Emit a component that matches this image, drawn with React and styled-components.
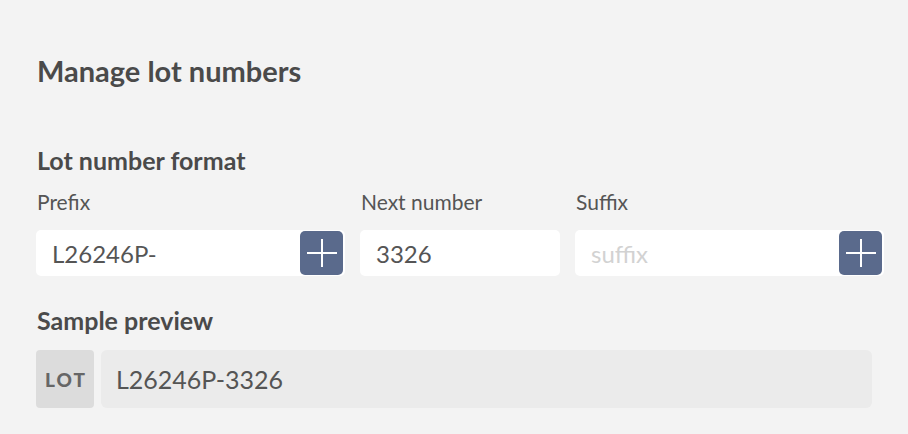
import React from 'react';
import styled, { createGlobalStyle } from 'styled-components';

const GlobalStyle = createGlobalStyle`
  html, body {
    margin: 0;
    padding: 0;
    background: #f3f3f3;
  }
  body {
    font-family: Lato, "Open Sans", sans-serif;
    color: #4a4a4a;
  }
  * { box-sizing: border-box; }
`;

const Page = styled.div`
  width: 908px;
  height: 434px;
  padding: 53px 24px 0 36px;
  background: #f3f3f3;
`;

const Title = styled.h1`
  margin: 0 0 57px 1px;
  font-size: 29px;
  line-height: 35px;
  font-weight: 700;
  color: #4a4a4a;
`;

const SectionTitle = styled.h2`
  margin: 0 0 ${(p) => p.$gap || 14}px 1px;
  font-size: 25px;
  line-height: 30px;
  font-weight: 700;
  color: #4a4a4a;
`;

const Fields = styled.div`
  display: grid;
  grid-template-columns: 309px 200px 309px;
  column-gap: 15px;
  margin-bottom: 29px;
`;

const Field = styled.div`
  display: flex;
  flex-direction: column;
  gap: 16px;
`;

const Label = styled.label`
  padding-left: 1px;
  font-size: 21px;
  line-height: 25px;
  color: #555;
`;

const InputBox = styled.div`
  display: flex;
  align-items: center;
  height: 46px;
  padding: 0 2px 0 16px;
  background: #fff;
  border-radius: 5px;
`;

const Input = styled.input`
  flex: 1;
  min-width: 0;
  border: none;
  outline: none;
  background: transparent;
  font-family: inherit;
  font-size: 24px;
  color: #555;
  padding: 0;

  &::placeholder {
    color: #d2d2d2;
  }
`;

const AddButton = styled.button`
  display: flex;
  align-items: center;
  justify-content: center;
  flex-shrink: 0;
  width: 43px;
  height: 44px;
  padding: 0;
  border: none;
  border-radius: 5px;
  background: #5a6a8c;
  cursor: pointer;
`;

const Preview = styled.div`
  display: flex;
  gap: 7px;
  height: 58px;
  width: 836px;
`;

const LotTag = styled.div`
  display: flex;
  align-items: center;
  justify-content: center;
  width: 58px;
  padding-left: 2px;
  background: #dcdcdc;
  border-radius: 4px;
  font-size: 19px;
  font-weight: 900;
  letter-spacing: 2px;
  color: #666;
`;

const PreviewValue = styled.div`
  flex: 1;
  display: flex;
  align-items: center;
  padding-left: 15px;
  background: #ebebeb;
  border-radius: 6px;
  font-size: 25px;
  color: #555;
`;

const PlusIcon = () => (
  <svg width="30" height="30" viewBox="0 0 30 30" fill="none">
    <path d="M15 1v28M0 15h30" stroke="#fff" strokeWidth="2" />
  </svg>
);

export default function App() {
  return (
    <>
      <GlobalStyle />
      <Page>
        <Title>Manage lot numbers</Title>
        <SectionTitle>Lot number format</SectionTitle>
        <Fields>
          <Field>
            <Label>Prefix</Label>
            <InputBox>
              <Input defaultValue="L26246P-" />
              <AddButton type="button"><PlusIcon /></AddButton>
            </InputBox>
          </Field>
          <Field>
            <Label>Next number</Label>
            <InputBox>
              <Input defaultValue="3326" />
            </InputBox>
          </Field>
          <Field>
            <Label>Suffix</Label>
            <InputBox>
              <Input placeholder="suffix" />
              <AddButton type="button"><PlusIcon /></AddButton>
            </InputBox>
          </Field>
        </Fields>
        <SectionTitle $gap={15}>Sample preview</SectionTitle>
        <Preview>
          <LotTag>LOT</LotTag>
          <PreviewValue>L26246P-3326</PreviewValue>
        </Preview>
      </Page>
    </>
  );
}
